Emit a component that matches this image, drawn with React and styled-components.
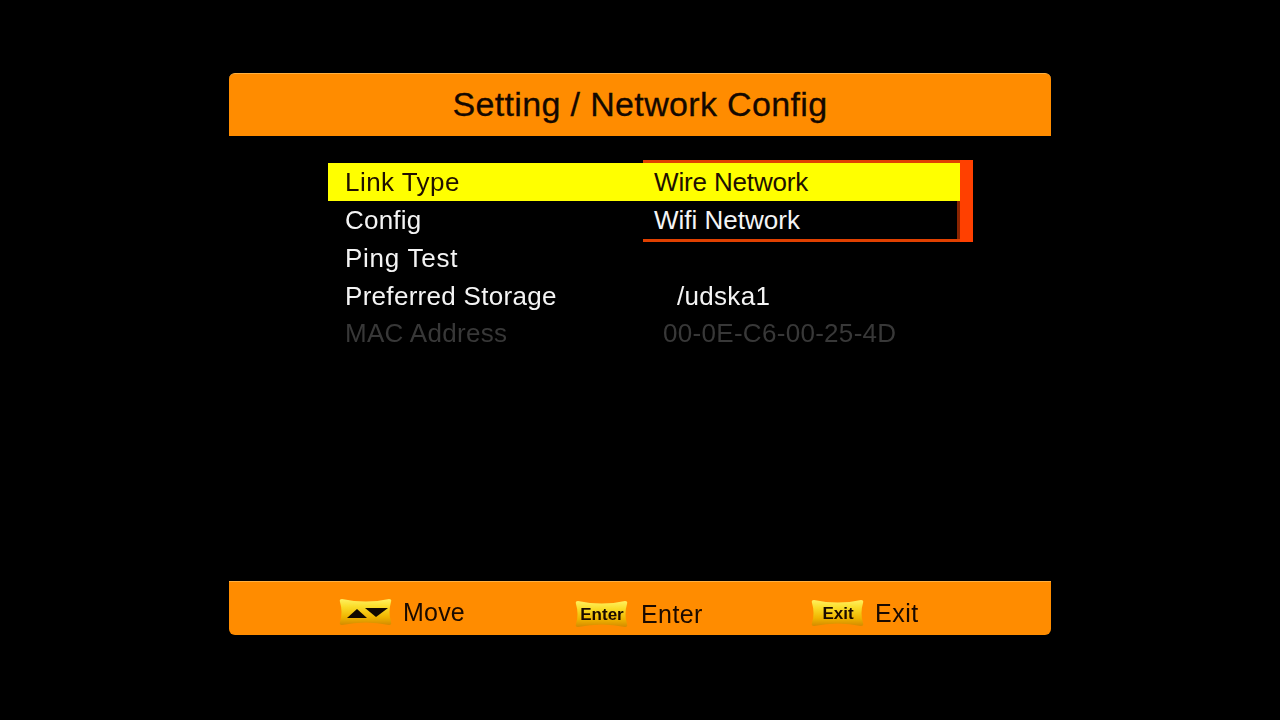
import styled, { createGlobalStyle } from "styled-components";

const GlobalStyle = createGlobalStyle`
  html, body {
    margin: 0;
    height: 100%;
    background: #000;
  }
  body {
    font-family: "Liberation Sans", Arial, sans-serif;
    overflow: hidden;
  }
`;

const Screen = styled.div`
  width: 822px;
  height: 720px;
  margin: 0 auto;
  padding: 73px 0 85px;
  box-sizing: border-box;
  display: flex;
  flex-direction: column;
  filter: blur(0.45px);
`;

const Header = styled.header`
  height: 63px;
  flex: none;
  background: #ff8c00;
  border-radius: 6px 6px 0 0;
  border-top: 1px solid #ffb040;
  box-sizing: border-box;
  display: flex;
  align-items: center;
  justify-content: center;
  color: #140800;
  font-size: 34px;
  letter-spacing: 0.35px;
  -webkit-text-stroke: 0.3px #140800;
  padding-bottom: 1px;
`;

const Main = styled.main`
  flex: 1;
  padding: 27px 0 0 99px;
`;

const Menu = styled.ul`
  position: relative;
  width: 632px;
  margin: 0;
  padding: 0;
  list-style: none;
`;

const Row = styled.li`
  height: 38px;
  display: flex;
  align-items: center;
  padding-left: 17px;
  font-size: 26px;
  letter-spacing: ${(p) => p.$spacing ?? 0.3}px;
  background: ${(p) => (p.$active ? "#ffff00" : "transparent")};
  color: ${(p) => (p.$active ? "#201000" : p.$disabled ? "#383838" : "#f4f4f4")};
  padding-bottom: ${(p) => (p.$disabled ? "2px" : "0")};
  box-sizing: border-box;
`;

const Label = styled.span`
  width: ${(p) => p.$width}px;
  flex: none;
`;

const Dropdown = styled.div`
  position: absolute;
  top: -3px;
  left: 315px;
  width: 330px;
  display: flex;
`;

const Options = styled.ul`
  flex: 1;
  margin: 0;
  padding: 0;
  list-style: none;
  border-top: 3px solid #e04000;
  border-bottom: 3px solid #e04000;
`;

const Option = styled.li`
  height: 38px;
  display: flex;
  align-items: center;
  padding-left: 11px;
  font-size: 26px;
  letter-spacing: ${(p) => (p.$active ? -0.15 : 0)}px;
  background: ${(p) => (p.$active ? "#ffff00" : "#000")};
  color: ${(p) => (p.$active ? "#201000" : "#f4f4f4")};
  border-right: ${(p) => (p.$active ? "0" : "3px solid #8a2400")};
  box-sizing: border-box;
`;

const Scrollbar = styled.div`
  width: 13px;
  flex: none;
  background: #ff4000;
`;

const Footer = styled.footer`
  height: 54px;
  flex: none;
  background: #ff8c00;
  border-radius: 0 0 6px 6px;
  border-top: 1px solid #ffb040;
  box-sizing: border-box;
  display: flex;
  align-items: center;
  padding: 10px 0 0 110px;
`;

const Hint = styled.div`
  width: 236px;
  flex: none;
  display: flex;
  align-items: center;
  gap: ${(p) => p.$gap ?? 11}px;
  color: #1a0a00;
  font-size: 25px;
  letter-spacing: ${(p) => p.$spacing ?? 0.2}px;
  margin-top: ${(p) => (p.$shift ?? 0) * 2}px;
`;

const KeycapSvg = styled.svg`
  width: 53px;
  height: 26px;
  flex: none;
  margin-bottom: 2px;
  letter-spacing: 0;
`;

function Keycap({ id, label, arrows }) {
  return (
    <KeycapSvg viewBox="0 0 53 26">
      <defs>
        <linearGradient id={id} x1="0" y1="0" x2="0" y2="1">
          <stop offset="0" stopColor="#fff060" />
          <stop offset="0.3" stopColor="#fadc28" />
          <stop offset="0.7" stopColor="#f0b400" />
          <stop offset="1" stopColor="#d48a00" />
        </linearGradient>
      </defs>
      <path
        d="M3 0 Q27 5 50 0 Q53 0 52 3 Q49 13 52 23 Q53 26 50 26 Q27 21 3 26 Q0 26 1 23 Q4 13 1 3 Q0 0 3 0 Z"
        fill={`url(#${id})`}
      />
      {arrows ? (
        <g fill="#120800">
          <path d="M8 19 L18 10 L28 19 Z" />
          <path d="M26 9 L49 9 L37 18 Z" />
        </g>
      ) : (
        <text
          x="27"
          y="19"
          textAnchor="middle"
          fontSize="17"
          fontWeight="700"
          fontFamily="Liberation Sans, Arial, sans-serif"
          fill="#1a0a00"
        >
          {label}
        </text>
      )}
    </KeycapSvg>
  );
}

export default function App() {
  return (
    <>
      <GlobalStyle />
      <Screen>
        <Header>Setting / Network Config</Header>
        <Main>
          <Menu>
            <Row $active $spacing={0.45}>Link Type</Row>
            <Row $spacing={0.2}>Config</Row>
            <Row $spacing={0.75}>Ping Test</Row>
            <Row>
              <Label $width={332}>Preferred Storage</Label>
              /udska1
            </Row>
            <Row $disabled>
              <Label $width={318}>MAC Address</Label>
              00-0E-C6-00-25-4D
            </Row>
            <Dropdown>
              <Options>
                <Option $active>Wire Network</Option>
                <Option>Wifi Network</Option>
              </Options>
              <Scrollbar />
            </Dropdown>
          </Menu>
        </Main>
        <Footer>
          <Hint $shift={-1}>
            <Keycap id="cap-move" arrows />
            Move
          </Hint>
          <Hint $shift={1} $gap={13} $spacing={0.4}>
            <Keycap id="cap-enter" label="Enter" />
            Enter
          </Hint>
          <Hint $shift={0} $spacing={0.5}>
            <Keycap id="cap-exit" label="Exit" />
            Exit
          </Hint>
        </Footer>
      </Screen>
    </>
  );
}
